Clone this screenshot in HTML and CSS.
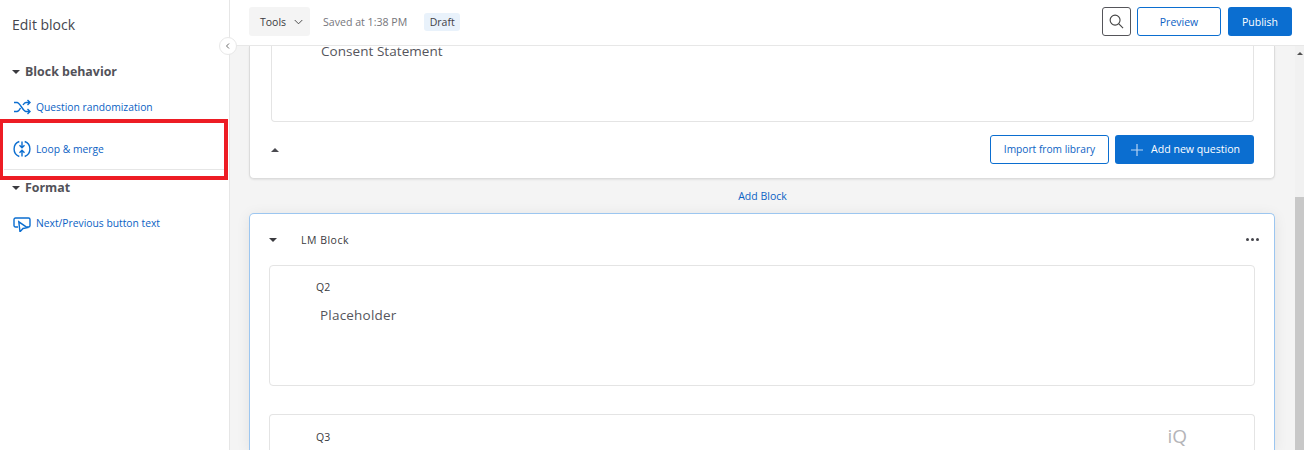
FILE: index.html
```html
<!DOCTYPE html>
<html lang="en">
<head>
<meta charset="utf-8">
<title>Edit block</title>
<link rel="stylesheet" href="styles.css">
</head>
<body>
<div class="app">
  <aside class="sidebar">
    <h1 class="side-title">Edit block</h1>
    <h2 class="side-heading side-heading-first"><span class="caret-down"></span>Block behavior</h2>
    <a class="side-link link-random">
      <svg class="side-icon" viewBox="0 0 18 18" fill="none" stroke="#0b6ed0" stroke-width="1.4"><path d="M1 4.500h3c3 0 6 9 9 9h3.500M1 13.500h3c1.500 0 2.700-2 3.500-3.500M10 7c.8-1.300 1.800-2.500 3-2.500h3.500M14.500 2l2.500 2.500-2.500 2.500M14.500 11l2.500 2.500-2.500 2.500"/></svg>
      <span>Question randomization</span>
    </a>
    <a class="side-link link-loop">
      <svg class="side-icon" viewBox="0 0 18 18" fill="none" stroke="#0b6ed0" stroke-width="1.4"><path d="M6.300 1.500A8 8 0 0 0 6.300 16.500M11.700 1.500A8 8 0 0 1 11.700 16.500M9 1.500v6M6.500 5.300L9 7.800l2.500-2.500M9 16.500v-6M6.500 12.700L9 10.200l2.500 2.500"/></svg>
      <span>Loop &amp; merge</span>
    </a>
    <div class="side-rule"></div>
    <h2 class="side-heading side-heading-format"><span class="caret-down"></span>Format</h2>
    <a class="side-link link-next">
      <svg class="side-icon" viewBox="0 0 18 18" fill="none" stroke="#0b6ed0" stroke-width="1.4"><path d="M5 13H2.500A1.500 1.500 0 0 1 1 11.500V5.500A1.500 1.500 0 0 1 2.500 4h13A1.500 1.500 0 0 1 17 5.500V11.500a1.500 1.500 0 0 1-1.500 1.500H14"/><path d="M5.800 7.800l1.200 10 3-3.300 4.300-.8z" fill="#fff"/></svg>
      <span>Next/Previous button text</span>
    </a>
  </aside>
  <button class="collapse" aria-label="Collapse"><svg viewBox="0 0 8 8" fill="none" stroke="#6b6b6b" stroke-width="1"><path d="M5 1.500L2.500 4 5 6.500"/></svg></button>
  <div class="main">
    <header class="topbar">
      <button class="tools">Tools<svg viewBox="0 0 10 6" fill="none" stroke="#3c3c3c" stroke-width="1"><path d="M.8.8L5 5 9.200.8"/></svg></button>
      <span class="saved">Saved at 1:38 PM</span>
      <span class="draft">Draft</span>
      <span class="spacer"></span>
      <button class="search" aria-label="Search"><svg viewBox="0 0 16 16" fill="none" stroke="#444" stroke-width="1.200"><circle cx="6.500" cy="6.500" r="5.300"/><path d="M10.500 10.500L15 15"/></svg></button>
      <button class="btn-outline preview">Preview</button>
      <button class="btn-solid publish">Publish</button>
    </header>
    <div class="body">
      <div class="canvas">
        <section class="block block-one">
          <div class="question q-consent"><p class="q-text q-text-consent">Consent Statement</p></div>
          <div class="block-foot">
            <span class="caret-up"></span>
            <span class="spacer"></span>
            <button class="btn-outline import">Import from library</button>
            <button class="btn-solid add"><svg viewBox="0 0 12 12" stroke="#b9d5f3" stroke-width="1.200"><path d="M6 0v12M0 6h12"/></svg>Add new question</button>
          </div>
        </section>
        <div class="add-block">Add Block</div>
        <section class="block block-two">
          <div class="block-head">
            <span class="caret-down"></span>
            <span class="block-name">LM Block</span>
            <span class="spacer"></span>
            <span class="dots"><i></i><i></i><i></i></span>
          </div>
          <div class="question q-two">
            <div class="q-num">Q2</div>
            <p class="q-text q-text-two">Placeholder</p>
          </div>
          <div class="question q-three">
            <div class="q-num">Q3</div>
            <span class="iq">iQ</span>
          </div>
        </section>
      </div>
      <div class="scrollbar"><span class="arrow"></span><span class="thumb"></span></div>
    </div>
  </div>
  <div class="highlight"></div>
</div>
</body>
</html>
```
FILE: styles.css
```css
* { box-sizing: border-box; }
html, body { margin: 0; height: 100%; overflow: hidden; }
body { font-family: "Open Sans", "Liberation Sans", sans-serif; color: #3f3f46; background: #fff; }
button { font-family: inherit; cursor: pointer; }
.app { position: relative; display: flex; width: 1304px; height: 450px; overflow: hidden; }
.spacer { flex: 1; }

.sidebar { width: 230px; flex: none; border-right: 1px solid #e6e6e6; background: #fff; padding-top: 15px; }
.side-title { margin: 0 0 0 12px; font-size: 14px; line-height: 19px; font-weight: 400; color: #45454d; }
.side-heading { display: flex; align-items: center; margin: 0; padding-left: 12px; font-size: 12.400px; line-height: 17px; font-weight: 700; color: #525259; }
.side-heading-first { margin-top: 29px; }
.side-heading-format { margin-top: 9px; }
.side-heading .caret-down { margin-right: 5px; }
.side-link { display: flex; align-items: center; padding-left: 13px; font-size: 10.300px; line-height: 18px; color: #0b62c4; }
.side-icon { width: 18px; height: 18px; margin-right: 5px; flex: none; }
.link-random { margin-top: 18px; }
.link-loop { margin-top: 24px; }
.side-rule { height: 1px; margin: 11px 5px 0 4px; background: #e6e6e6; }
.link-next { margin-top: 18px; }
.caret-down { display: inline-block; width: 0; height: 0; border: 4px solid transparent; border-top-color: #3a3a3f; border-bottom-width: 0; }
.caret-up { display: inline-block; width: 0; height: 0; border: 4px solid transparent; border-bottom-color: #4a4a50; border-top-width: 0; }

.collapse { position: absolute; left: 219px; top: 37px; z-index: 3; width: 18px; height: 18px; padding: 4px; border: 1px solid #e8e8e8; border-radius: 50%; background: #fff; display: flex; }
.collapse svg { width: 8px; height: 8px; }

.main { flex: 1; min-width: 0; display: flex; flex-direction: column; }
.topbar { height: 46px; flex: none; display: flex; align-items: center; padding: 0 12px 2px 19px; background: #fff; border-bottom: 1px solid #e8e8e8; }
.tools { width: 61px; height: 29px; display: flex; align-items: center; gap: 8px; padding: 0 0 0 11px; border: 0; border-radius: 3px; background: #f4f4f4; font-size: 10.500px; color: #3a3a40; }
.tools svg { width: 9px; height: 6px; }
.saved { margin-left: 13px; font-size: 10.600px; color: #76767c; }
.draft { margin-left: 17px; width: 36px; height: 18px; border-radius: 3px; background: #e9f2fb; font-size: 10.500px; line-height: 18px; text-align: center; color: #3f3f46; }
.search { width: 29px; height: 29px; padding: 6px; margin-right: 6px; border: 1px solid #55555a; border-radius: 3px; background: #fff; display: flex; }
.search svg { width: 15px; height: 15px; }
.btn-outline { border: 1px solid #0b6ed0; border-radius: 3px; background: #fff; color: #0b62c4; font-size: 10.500px; padding: 0; }
.btn-solid { border: 0; border-radius: 3px; background: #0b6ed0; color: #fff; font-size: 10.500px; padding: 0; }
.preview { width: 84px; height: 29px; margin-right: 7px; }
.publish { width: 64px; height: 29px; }

.body { flex: 1; min-height: 0; display: flex; background: #f4f4f4; }
.canvas { flex: 1; min-width: 0; padding: 0 19px; }
.block { width: 1026px; background: #fff; border: 1px solid #dcdcdc; border-radius: 0 0 5px 5px; }
.block-one { height: 133px; border-top: 0; padding: 0 20px 0 21px; box-shadow: 0 1px 2px rgba(0,0,0,.08); }
.question { border: 1px solid #e4e4e4; border-radius: 0 0 4px 4px; }
.q-consent { height: 76px; border-top: 0; padding: 0 0 0 49px; }
.q-text { margin: 0; font-size: 13.500px; line-height: 18px; color: #55555c; }
.q-text-consent { line-height: 10px; letter-spacing: .05px; }
.block-foot { display: flex; align-items: center; height: 29px; margin-top: 13px; }
.import { width: 119px; height: 29px; margin-right: 6px; padding-bottom: 2px; font-size: 10.200px; }
.add { width: 139px; height: 29px; display: flex; align-items: center; padding: 0 0 2px 16px; gap: 8px; font-size: 10.600px; }
.add svg { width: 12px; height: 12px; margin-top: 2px; }
.add-block { height: 34px; padding-top: 10px; text-align: center; font-size: 10.500px; line-height: 15px; color: #0b62c4; }
.block-two { height: 237px; padding: 0 19px; border: 1px solid #9cc6f0; border-bottom: 0; border-radius: 5px 5px 0 0; box-shadow: 0 2px 14px rgba(0,0,0,.08); }
.block-head { display: flex; align-items: center; height: 51px; }
.block-head .caret-down { margin-right: 24px; }
.block-name { font-size: 10.500px; letter-spacing: .5px; color: #3a3a40; }
.dots { display: flex; gap: 2px; margin-right: -4px; }
.dots i { width: 3px; height: 3px; border-radius: 50%; background: #45454b; }
.q-two { width: 986px; height: 121px; border-top: 1px solid #e4e4e4; border-radius: 4px; padding: 14px 0 0 46px; }
.q-three { position: relative; width: 986px; height: 36px; margin-top: 28px; border-bottom: 0; border-radius: 4px 4px 0 0; padding: 15px 0 0 46px; }
.q-num { font-size: 10.500px; line-height: 15px; color: #3a3a40; }
.q-text-two { margin: 11px 0 0 4px; letter-spacing: .2px; }
.iq { position: absolute; right: 67px; top: 9px; font-size: 19px; line-height: 24px; color: #b4b4b8; }

.scrollbar { position: relative; width: 9px; flex: none; background: #f1f1f1; }
.arrow { position: absolute; left: 2px; top: 6px; width: 0; height: 0; border: 3px solid transparent; border-bottom-color: #505050; border-top-width: 0; }
.thumb { position: absolute; left: 0; top: 151px; right: 0; bottom: 0; background: #c8c8c8; }

.highlight { position: absolute; left: 0; top: 119px; width: 228px; height: 61px; border: 4px solid #ed1c24; border-left-width: 3px; pointer-events: none; }
```
